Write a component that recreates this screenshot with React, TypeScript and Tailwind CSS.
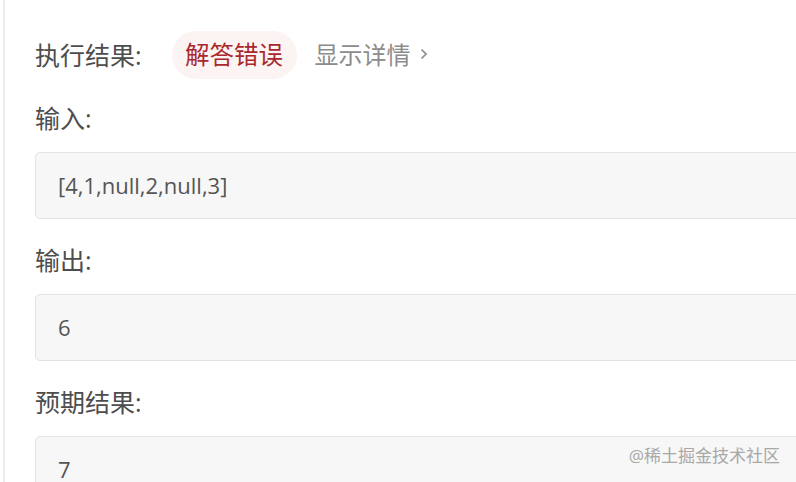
import React from "react";

const font = '"Open Sans", "Noto Sans CJK SC", sans-serif';

function Field({ label, value }: { label: string; value: string }) {
  return (
    <div className="flex flex-col">
      <div className="h-[36px] leading-[36px] text-[25px] text-[#4d4d4d]">{label}</div>
      <div className="mt-[16px] mb-[23px] h-[67px] w-[800px] rounded-[5px] border border-[#e3e3e3] bg-[#f7f7f7] pl-[22px] flex items-center text-[22px] text-[#555555]">
        {value}
      </div>
    </div>
  );
}

export default function App() {
  return (
    <div
      className="relative w-[796px] h-[482px] overflow-hidden bg-white"
      style={{ fontFamily: font }}
    >
      <div className="ml-[3px] mt-[-4px] h-[520px] rounded-tl-[6px] border-l-2 border-t-2 border-[#ececec] pl-[30px] pt-[33px]">
        <div className="flex items-center h-[48px]">
          <span className="text-[25px] text-[#4d4d4d] leading-[36px]">执行结果:</span>
          <span className="ml-[30px] h-[48px] w-[125px] rounded-full bg-[#fcf3f3] flex items-center justify-center text-[24.5px] text-[#a9282d]">
            解答错误
          </span>
          <span className="ml-[18px] text-[24px] text-[#8c8c8c] flex items-center">
            显示详情
            <svg width="10" height="16" viewBox="0 0 10 16" className="ml-[8px] mt-[-2px]">
              <path d="M2.5 3.5 L7 8 L2.5 12.5" fill="none" stroke="#8c8c8c" strokeWidth="1.7" />
            </svg>
          </span>
        </div>
        <div className="mt-[21px]">
          <Field label="输入:" value="[4,1,null,2,null,3]" />
          <Field label="输出:" value="6" />
          <Field label="预期结果:" value="7" />
        </div>
      </div>
      <div className="absolute right-[16px] top-[444px] text-[17px] leading-[24px] text-[#a8a8a8]">
        @稀土掘金技术社区
      </div>
    </div>
  );
}
